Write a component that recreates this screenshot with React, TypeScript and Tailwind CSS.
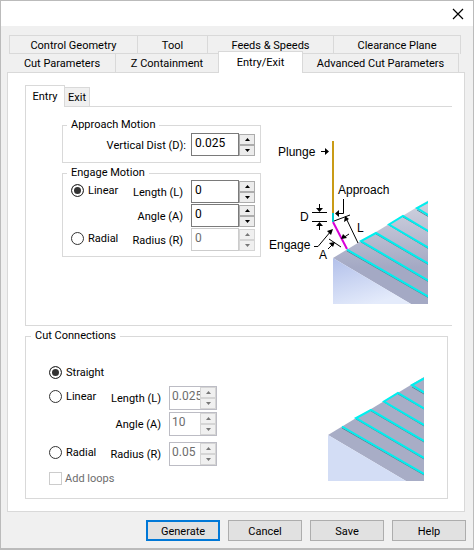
import type { ReactNode } from "react";

function TopTab({ children, active }: { children: ReactNode; active?: boolean }) {
  return (
    <button
      role="tab"
      aria-selected={!!active}
      className={`flex justify-center whitespace-nowrap border-[#d9d9d9] text-[11px] ${
        active ? "relative -mt-[3px] -mb-px -ml-px h-[22px] border border-b-0 bg-white leading-[22px]" : "h-[18px] border-r leading-5"
      }`}
    >
      {children}
    </button>
  );
}

function Spinner({ label, value, disabled, inset }: { label: string; value: string; disabled?: boolean; inset?: boolean }) {
  const step = `flex h-[11px] w-4 items-center justify-center border ${
    disabled ? "border-[#d5d5d5] bg-[#f0f0f0]" : "border-[#acacac] bg-[#ececec]"
  }`;
  const fill = disabled ? "#777777" : "#000000";
  const steps = (
    <span className={`flex shrink-0 flex-col ${inset ? "bg-[#e3e3e8]" : ""}`}>
      <button aria-label={`Increase ${label}`} disabled={disabled} className={step}>
        <svg width="5" height="3" viewBox="0 0 5 3"><path d="M0 3L2.5 0L5 3Z" fill={fill} /></svg>
      </button>
      <button aria-label={`Decrease ${label}`} disabled={disabled} className={step}>
        <svg width="5" height="3" viewBox="0 0 5 3"><path d="M0 0L2.5 3L5 0Z" fill={fill} /></svg>
      </button>
    </span>
  );
  if (inset) {
    return (
      <span className="flex h-6 w-12 border border-[#bcbcc4] bg-white">
        <input aria-label={label} defaultValue={value} disabled={disabled} className="h-[18px] w-[30px] min-w-0 pl-0.5 text-xs text-[#6d6d6d] outline-none" />
        {steps}
      </span>
    );
  }
  return (
    <span className="flex items-center">
      <span className={`flex h-[23px] w-12 border bg-white ${disabled ? "border-[#cccccc]" : "border-[#7a7a7a]"}`}>
        <input aria-label={label} defaultValue={value} disabled={disabled} className={`h-[18px] w-full min-w-0 pl-[3px] text-xs outline-none ${disabled ? "text-[#6d6d6d]" : "text-black"}`} />
      </span>
      {steps}
    </span>
  );
}

function Radio({ name, label, checked }: { name: string; label: string; checked?: boolean }) {
  return (
    <label className="mt-px flex items-center gap-1 self-start">
      <input
        type="radio"
        name={name}
        defaultChecked={checked}
        className="size-[13px] shrink-0 appearance-none rounded-full border border-[#333333] bg-white checked:bg-[#333333] checked:shadow-[inset_0_0_0_2px_white]"
      />
      <span className="pt-0.5">{label}</span>
    </label>
  );
}

function Stock({ shaded }: { shaded?: boolean }) {
  return (
    <g>
      <path d="M0 58L96 0V104H78Z" fill={shaded ? "url(#top)" : "#a8adc6"} />
      <path d="M0 58L78 104H0Z" fill={shaded ? "url(#side)" : "#d3ddf5"} />
      <path d="M14 51L96 98M96 82L28 42M43 34L96 65M96 49L56 25M70 17L96 32M96 17L84 10" fill="none" stroke="#4c8f9f" strokeWidth="1" />
      <path d="M14 49.500L96 97M96 81L28 41L43 33L96 64M96 48L56 24.500L70 16L96 31.500M96 15.500L84 8L96 1.500" fill="none" stroke="#00efef" strokeWidth="2" />
    </g>
  );
}

function EngageDiagram() {
  return (
    <svg width="166" height="180" viewBox="262 125 166 180" role="img" aria-label="Entry motion" className="block" fontFamily="'Liberation Sans', sans-serif" fontSize="12">
      <defs>
        <linearGradient id="top" x1="0" y1="0" x2="0" y2="1">
          <stop offset="0" stopColor="#d0d2df" />
          <stop offset="0.65" stopColor="#a4a9c4" />
          <stop offset="1" stopColor="#a4a9c4" />
        </linearGradient>
        <linearGradient id="side" x1="0" y1="0" x2="0.500" y2="1">
          <stop offset="0" stopColor="#b2c0ea" />
          <stop offset="1" stopColor="#e4ebfb" />
        </linearGradient>
      </defs>
      <g transform="translate(333 200)"><Stock shaded /></g>
      <path d="M333 141V213" stroke="#c99b16" strokeWidth="2" />
      <path d="M333 213V222" stroke="#00cfd0" strokeWidth="2" />
      <path d="M333 222L347 249" stroke="#d800d8" strokeWidth="2" />
      <g fill="none" stroke="black" strokeWidth="1">
        <path d="M321 151.500H327M343.500 199V213.500H337M312 212.500H327M312 221.500H327M319.500 204V210M319.500 224V230" />
        <path d="M334 221L350 215M346 218L358 243M314 246.500H318L331 231M329 239L341 247M328 249L333 244M349 234L343 238" />
      </g>
      <g fill="black">
        <path d="M329 151.500L325 148V155ZM335 213.500L339 210V217ZM319.500 212L316 208H323ZM319.500 222L316 226H323Z" />
        <path d="M333 229L331 235L327 231ZM345 216L344 222L349 219ZM341 239L343 234L347 238ZM335 242L333 247L329 243Z" />
        <text x="278" y="156">Plunge</text>
        <text x="338" y="194">Approach</text>
        <text x="300" y="221">D</text>
        <text x="357" y="232">L</text>
        <text x="269" y="249">Engage</text>
        <text x="319" y="259">A</text>
      </g>
    </svg>
  );
}

export default function App() {
  const bottom = "h-[21px] w-[74px] bg-[#e1e1e1] pt-0.5 text-[11px]";
  const caption = "self-center pt-0.5 text-right";
  return (
    <main className="border border-b-2 border-[#bbbbbb] bg-[#f0f0f0] pb-[7px] font-[Roboto,'Liberation_Sans',sans-serif] text-[11px] leading-4 text-black">
      <header className="flex h-[25px] items-center justify-end bg-white pr-[9px]">
        <button aria-label="Close">
          <svg width="12" height="12" viewBox="0 0 12 12" className="block"><path d="M1 1L11 11M11 1L1 11" stroke="black" strokeWidth="1.200" /></svg>
        </button>
      </header>

      <div className="px-2 pt-[9px]">
        <div role="tablist" className="mr-1 grid h-[18px] grid-cols-[128fr_70fr_126fr_127fr] border-t border-l border-[#d9d9d9]">
          <TopTab>Control Geometry</TopTab>
          <TopTab>Tool</TopTab>
          <TopTab>Feeds &amp; Speeds</TopTab>
          <TopTab>Clearance Plane</TopTab>
        </div>
        <div role="tablist" className="mr-1.5 grid h-[19px] grid-cols-[107fr_103fr_84fr_156fr] border-t border-[#d9d9d9]">
          <TopTab>Cut Parameters</TopTab>
          <TopTab>Z Containment</TopTab>
          <TopTab active>Entry/Exit</TopTab>
          <TopTab>Advanced Cut Parameters</TopTab>
        </div>
      </div>

      <section className="mr-2 ml-1.5 border border-[#d9d9d9] bg-white pt-3 pr-3 pb-3 pl-[17px]">
        <div role="tablist" className="flex h-[21px] items-end">
          <button role="tab" aria-selected="true" className="relative -mb-px h-[22px] w-10 border border-b-0 border-[#d9d9d9] bg-white">Entry</button>
          <button role="tab" aria-selected="false" className="h-[19px] w-[25px] border border-b-0 border-l-0 border-[#d9d9d9] bg-[#f0f0f0] pt-0.5">Exit</button>
        </div>
        <div className="flex h-[220px] justify-between border border-r-0 border-[#d9d9d9] pt-2.5 pr-6 pl-9">
          <div className="w-[199px] shrink-0">
            <fieldset className="h-[46px] border border-[#d9d9d9] pr-[5px] pl-[3px]">
              <legend className="ml-px px-1">Approach Motion</legend>
              <div className="flex justify-end gap-[5px]">
                <span className={caption}>Vertical Dist (D):</span>
                <Spinner label="Vertical Dist (D)" value="0.025" />
              </div>
            </fieldset>
            <fieldset className="mt-0.5 h-[92px] border border-[#d9d9d9] pr-[5px] pl-[3px]">
              <legend className="ml-px px-1">Engage Motion</legend>
              <div className="-mt-px grid grid-cols-[1fr_auto_auto] gap-x-2 gap-y-px pl-[5px]">
                <Radio name="engage" label="Linear" checked />
                <span className={caption}>Length (L)</span>
                <Spinner label="Length (L)" value="0" />
                <span className={`col-start-2 ${caption}`}>Angle (A)</span>
                <Spinner label="Angle (A)" value="0" />
                <Radio name="engage" label="Radial" />
                <span className={caption}>Radius (R)</span>
                <Spinner label="Radius (R)" value="0" disabled />
              </div>
            </fieldset>
          </div>
          <div className="pt-2"><EngageDiagram /></div>
        </div>

        <fieldset className="mt-0.5 mr-1 h-[171px] border border-[#d9d9d9] pr-[23px] pl-[23px]">
          <legend className="-ml-[18px] px-1">Cut Connections</legend>
          <div className="flex items-start justify-between">
            <div>
              <div className="pt-[18px]"><Radio name="connect" label="Straight" checked /></div>
              <div className="mt-[5px] grid w-[168px] grid-cols-[1fr_auto_auto] gap-x-2 gap-y-0.5 whitespace-nowrap">
                <Radio name="connect" label="Linear" />
                <span className={caption}>Length (L)</span>
                <Spinner label="Connection length (L)" value="0.025" disabled inset />
                <span className={`col-start-2 ${caption}`}>Angle (A)</span>
                <Spinner label="Connection angle (A)" value="10" disabled inset />
                <span className="col-span-3 h-0.5" />
                <Radio name="connect" label="Radial" />
                <span className={caption}>Radius (R)</span>
                <Spinner label="Connection radius (R)" value="0.05" disabled inset />
              </div>
              <label className="mt-[3px] flex items-center gap-[3px] text-[#6d6d6d]">
                <input type="checkbox" disabled className="size-[13px] appearance-none border border-[#cccccc] bg-white" />
                <span className="pt-0.5">Add loops</span>
              </label>
            </div>
            <svg width="96" height="104" viewBox="0 0 96 104" role="img" aria-label="Cut connections" className="mt-[33px] block"><Stock /></svg>
          </div>
        </fieldset>
      </section>

      <footer className="mt-2 flex justify-end gap-2 pr-[7px]">
        <button className={`${bottom} border-2 border-[#0078d7]`}>Generate</button>
        <button className={`${bottom} border border-[#adadad]`}>Cancel</button>
        <button className={`${bottom} border border-[#adadad]`}>Save</button>
        <button className={`${bottom} border border-[#adadad]`}>Help</button>
      </footer>
    </main>
  );
}
